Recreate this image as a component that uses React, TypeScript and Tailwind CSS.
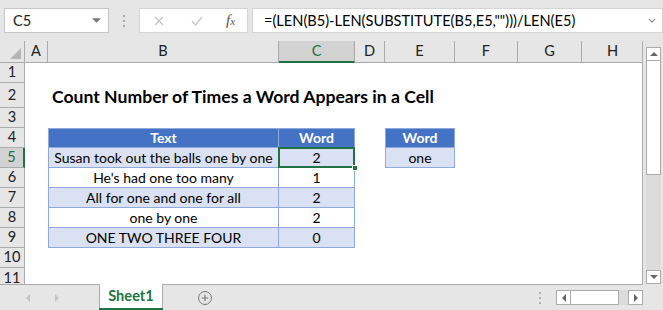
import React from "react";

const COLS = [
  { key: "A", w: 23 },
  { key: "B", w: 231 },
  { key: "C", w: 76 },
  { key: "D", w: 30 },
  { key: "E", w: 70 },
  { key: "F", w: 63 },
  { key: "G", w: 64 },
  { key: "H", w: 61 },
];

const data = [
  { text: "Susan took out the balls one by one", n: 2 },
  { text: "He's had one too many", n: 1 },
  { text: "All for one and one for all", n: 2 },
  { text: "one by one", n: 2 },
  { text: "ONE TWO THREE FOUR", n: 0 },
];

const font = { fontFamily: "Lato, 'Liberation Sans', sans-serif" };

function Cell({ row, col }: { row: number; col: string }) {
  const idx = row - 5;
  const band = idx % 2 === 0 ? "bg-[#d9e1f2]" : "bg-white";
  const base = "relative flex items-center justify-center text-[14px] leading-none text-black whitespace-nowrap";

  if (row === 2 && col === "B") {
    return (
      <div className="relative bg-white">
        <span className="absolute left-[4px] top-[5px] text-[17.6px] font-bold leading-none text-black whitespace-nowrap">
          Count Number of Times a Word Appears in a Cell
        </span>
      </div>
    );
  }
  if (row === 4 && (col === "B" || col === "C" || col === "E")) {
    return (
      <div
        className={`${base} bg-[#4472c4] font-bold text-white border-t border-b border-r border-[#8ea9db] ${
          col === "C" ? "" : "border-l"
        }`}
      >
        {col === "B" ? "Text" : "Word"}
      </div>
    );
  }
  if (row >= 5 && row <= 9 && (col === "B" || col === "C")) {
    const d = data[idx];
    const active = row === 5 && col === "C";
    return (
      <div
        className={`${base} ${band} border-b border-r border-[#8ea9db] ${col === "B" ? "border-l" : ""} ${
          active ? "z-10" : ""
        }`}
      >
        {col === "B" ? d.text : d.n}
        {active && (
          <>
            <div className="pointer-events-none absolute -left-[1px] -top-[1px] -right-[1px] -bottom-[1px] border-2 border-[#217346]" />
            <div className="absolute -right-[4px] -bottom-[4px] h-[6px] w-[6px] border border-white bg-[#217346]" />
          </>
        )}
      </div>
    );
  }
  if (row === 5 && col === "E") {
    return <div className={`${base} bg-[#d9e1f2] border-b border-l border-r border-[#8ea9db]`}>one</div>;
  }
  return <div className="bg-white" />;
}

function Tri({ dir, className }: { dir: "up" | "down" | "left" | "right"; className?: string }) {
  const pts = {
    up: "0,5 5,0 10,5",
    down: "0,0 10,0 5,5",
    left: "5,0 5,10 0,5",
    right: "0,0 0,10 5,5",
  }[dir];
  const vb = dir === "up" || dir === "down" ? "0 0 10 5" : "0 0 5 10";
  return (
    <svg viewBox={vb} className={className}>
      <polygon points={pts} fill="currentColor" />
    </svg>
  );
}

export default function App() {
  const rows = [1, 2, 3, 4, 5, 6, 7, 8, 9, 10, 11];
  return (
    <div className="flex h-[310px] w-[663px] flex-col overflow-hidden bg-[#e6e6e6]" style={font}>
      {/* formula bar */}
      <div className="flex h-[41px] shrink-0 items-start pt-[8px]">
        <div className="ml-[4px] flex h-[25px] w-[105px] items-center justify-between border border-[#c6c6c6] bg-white pl-[8px] pr-[7px] text-[14.6px] text-[#222]">
          <span>C5</span>
          <Tri dir="down" className="h-[5px] w-[9px] text-[#777]" />
        </div>
        <div className="ml-[14px] flex h-[25px] flex-col items-center justify-center gap-[3px]">
          <span className="h-[2px] w-[2px] bg-[#aaa]" />
          <span className="h-[2px] w-[2px] bg-[#aaa]" />
          <span className="h-[2px] w-[2px] bg-[#aaa]" />
        </div>
        <div className="ml-[14px] flex h-[25px] w-[109px] items-center border border-[#d4d4d4] bg-white">
          <svg viewBox="0 0 10 10" className="ml-[14px] h-[10px] w-[10px]">
            <path d="M1 1 L9 9 M9 1 L1 9" stroke="#c4c4c4" strokeWidth="1.3" />
          </svg>
          <svg viewBox="0 0 12 10" className="ml-[27px] h-[10px] w-[12px]">
            <path d="M1 5 L4.5 9 L11 1" stroke="#c4c4c4" strokeWidth="1.3" fill="none" />
          </svg>
          <span
            className="ml-[23px] text-[15px] italic text-[#555]"
            style={{ fontFamily: "'Liberation Serif', serif" }}
          >
            f<span className="text-[11px]">x</span>
          </span>
        </div>
        <div className="ml-[4px] flex h-[25px] flex-1 items-center justify-between border border-[#d4d4d4] bg-white pl-[11px] pr-[6px] text-[14.6px] text-black">
          <span>=(LEN(B5)-LEN(SUBSTITUTE(B5,E5,"")))/LEN(E5)</span>
          <svg viewBox="0 0 10 6" className="h-[5px] w-[8px]">
            <path d="M1 1 L5 5 L9 1" stroke="#888" strokeWidth="1.4" fill="none" />
          </svg>
        </div>
      </div>

      {/* sheet + vertical scrollbar */}
      <div className="flex h-[244px] shrink-0">
        <div
          className="grid h-[244px] w-[643px] overflow-hidden border-r border-b border-[#ababab]"
          style={{
            gridTemplateColumns: `25px ${COLS.map((c) => `${c.w}px`).join(" ")}`,
            gridTemplateRows: "22px 20px 25px repeat(8, 20px) 16px",
          }}
        >
          {/* column header row */}
          <div className="relative border-r border-b border-[#ababab] bg-[#e6e6e6]">
            <svg viewBox="0 0 10 10" className="absolute bottom-[3px] right-[3px] h-[11px] w-[11px]">
              <polygon points="10,0 10,10 0,10" fill="#b4b4b4" />
            </svg>
          </div>
          {COLS.map((c) => (
            <div
              key={c.key}
              className={`flex items-center justify-center text-[14.6px] leading-none ${
                c.key === "C"
                  ? "border-b-2 border-r border-b-[#217346] border-r-[#ababab] bg-[#d2d2d2] text-[#217346]"
                  : "border-r border-b border-[#ababab] bg-[#e6e6e6] text-[#222]"
              } ${c.key === "H" ? "border-r-0" : ""}`}
            >
              {c.key}
            </div>
          ))}
          {rows.map((r) => (
            <React.Fragment key={r}>
              <div
                className={`flex justify-center overflow-hidden text-[14.6px] leading-none ${
                  r === 5
                    ? "border-r-2 border-b border-r-[#217346] border-b-[#ababab] bg-[#d2d2d2] text-[#217346]"
                    : "border-r border-b border-[#ababab] bg-[#e6e6e6] text-[#222]"
                } ${r === 11 ? "items-start border-b-0 pt-[3px]" : "items-center"}`}
              >
                {r}
              </div>
              {COLS.map((c) => (
                <Cell key={c.key} row={r} col={c.key} />
              ))}
            </React.Fragment>
          ))}
        </div>
        <div className="ml-[3px] flex w-[15px] flex-col pt-[6px]">
          <div className="flex h-[14px] items-center justify-center border border-[#ababab] bg-white">
            <Tri dir="up" className="h-[4px] w-[8px] text-[#666]" />
          </div>
          <div className="h-[114px] border-x border-b border-[#ababab] bg-white" />
          <div className="flex-1 bg-[#dcdcdc]" />
          <div className="flex h-[14px] items-center justify-center border border-[#ababab] bg-white">
            <Tri dir="down" className="h-[4px] w-[8px] text-[#666]" />
          </div>
          <div className="h-[1px]" />
        </div>
      </div>

      {/* tab bar */}
      <div className="flex h-[25px] shrink-0 items-stretch">
        <div className="flex w-[99px] items-center">
          <Tri dir="left" className="ml-[26px] h-[8px] w-[4px] text-[#c4c4c4]" />
          <Tri dir="right" className="ml-[25px] h-[8px] w-[4px] text-[#c4c4c4]" />
        </div>
        <div className="-mt-[1px] flex w-[64px] flex-col border-x border-[#ababab] bg-white">
          <div className="flex flex-1 items-center justify-center text-[14.6px] font-bold text-[#217346]">Sheet1</div>
          <div className="mx-[-1px] h-[2px] bg-[#217346]" />
        </div>
        <div className="ml-[35px] flex items-center">
          <div className="flex h-[14px] w-[14px] items-center justify-center rounded-full border border-[#777] text-[#777]">
            <svg viewBox="0 0 10 10" className="h-[8px] w-[8px]">
              <path d="M5 1 V9 M1 5 H9" stroke="currentColor" strokeWidth="1.4" />
            </svg>
          </div>
        </div>
        <div className="flex flex-1 items-center justify-end">
          <div className="mr-[15px] flex flex-col gap-[3px]">
            <span className="h-[2px] w-[2px] bg-[#b0b0b0]" />
            <span className="h-[2px] w-[2px] bg-[#b0b0b0]" />
            <span className="h-[2px] w-[2px] bg-[#b0b0b0]" />
          </div>
          <div className="mr-[20px] flex h-[15px] items-stretch">
            <div className="flex w-[15px] items-center justify-center border border-[#ababab] bg-white">
              <Tri dir="left" className="h-[8px] w-[4px] text-[#666]" />
            </div>
            <div className="w-[48px] border-y border-r border-[#ababab] bg-white" />
            <div className="w-[9px] bg-[#dcdcdc]" />
            <div className="flex w-[15px] items-center justify-center border border-[#ababab] bg-white">
              <Tri dir="right" className="h-[8px] w-[4px] text-[#666]" />
            </div>
          </div>
        </div>
      </div>
    </div>
  );
}
